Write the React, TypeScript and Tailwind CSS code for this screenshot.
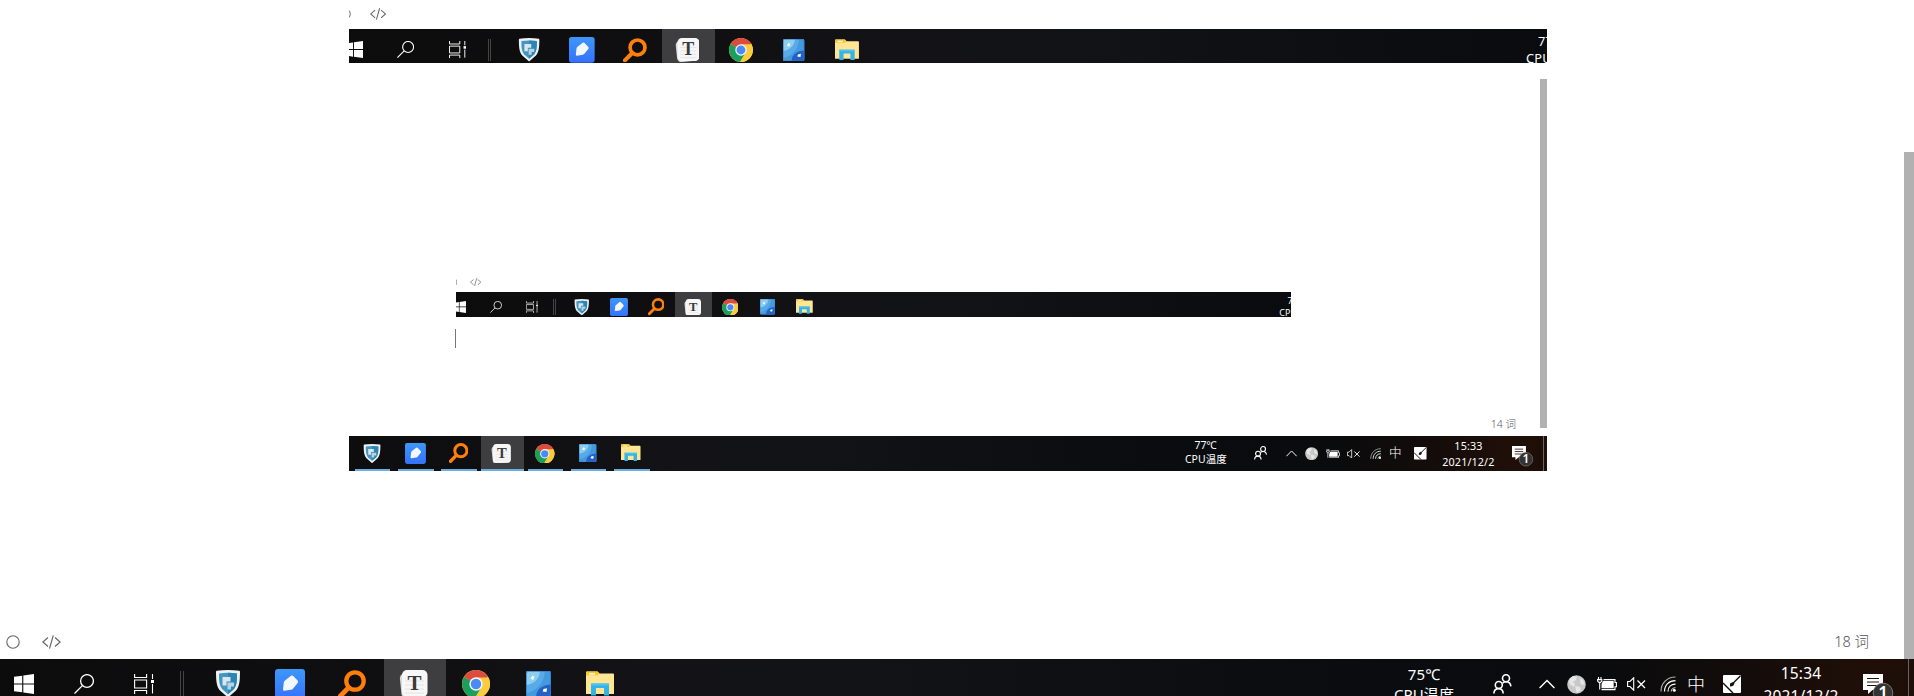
import React from "react";

function WindowsIcon() {
  return (
    <svg width="20" height="20" viewBox="0 0 20 20" fill="#fff">
      <path d="M0 2.8 8.2 1.7V9.4H0zM9.3 1.5 20 0V9.4H9.3zM0 10.5H8.2V18.3L0 17.2zM9.3 10.5H20V20L9.3 18.5z" />
    </svg>
  );
}

function SearchIcon() {
  return (
    <svg width="20" height="20" viewBox="0 0 20 20" fill="none" stroke="#fff" strokeWidth="1.3">
      <circle cx="13" cy="7" r="6.4" />
      <path d="M8.4 11.6.5 19.5" />
    </svg>
  );
}

function TaskViewIcon() {
  return (
    <svg width="20" height="20" viewBox="0 0 20 20" fill="none" stroke="#fff" strokeWidth="1.1">
      <path d="M.6 0v3.5h12V0M.6 20v-3.5h12V20M.6 6h12v8H.6zM18.5 0v5M18.5 10v9.5" />
      <rect x="17" y="6" width="3" height="3" fill="#fff" stroke="none" />
    </svg>
  );
}

function ShieldIcon() {
  return (
    <svg width="26" height="28" viewBox="0 0 26 28">
      <path d="M1.600.8Q13-.6 24.400.8 25.200 1 25 3C24.800 9 25 16 21 20.500L13 27.500 5 20.500C1 16 1.200 9 1 3Q.8 1 1.600.8z" fill="#eef1f3" />
      <path d="M4 3.600Q13 2 22 3.600C22 10 22 15 19 19L13 24.200 7 19C4 15 4 10 4 3.600z" fill="#4197c2" />
      <path d="M13 2.800Q18 2.800 22 3.600C22 10 22 15 19 19L13 24.200z" fill="#2b86b4" />
      <path d="M7.500 7h8v4.500h-4v4h-4z" fill="#dbe6ec" />
      <path d="M12.500 12.500h6.500v4h-3v3h-3.500z" fill="#b9d2df" />
    </svg>
  );
}

function NoteIcon() {
  return (
    <svg width="30" height="30" viewBox="0 0 30 30">
      <defs>
        <linearGradient id="note" x1="0" y1="0" x2="0" y2="1">
          <stop offset="0" stopColor="#3d97fb" />
          <stop offset="1" stopColor="#3672fb" />
        </linearGradient>
      </defs>
      <rect width="30" height="30" rx="3" fill="url(#note)" />
      <path d="M8 20.500 8.800 13.500Q9 12.300 10 11.500L16 6.800Q17.200 6 18.200 7L22.600 11.600Q23.600 12.800 22.600 14L18 19.700Q17.300 20.500 16 20.700L9.200 21.800Q7.900 21.900 8 20.500z" fill="#f3f8ff" />
    </svg>
  );
}

function FinderIcon() {
  return (
    <svg width="28" height="29" viewBox="0 0 28 29" fill="none" stroke="#ff7f0a">
      <circle cx="17" cy="11" r="8.700" strokeWidth="4.300" />
      <path d="M10.500 17.800 2.200 26.200" strokeWidth="4.800" strokeLinecap="round" />
    </svg>
  );
}

function TyporaIcon() {
  return (
    <svg width="29" height="28" viewBox="0 0 29 28" className="mr-0.5">
      <rect x="1.500" y="2.500" width="25" height="25" rx="5" fill="#d9d9d9" transform="rotate(-6 14 14)" />
      <rect x="3" y="0" width="25.500" height="27" rx="5" fill="#f7f7f7" />
      <path d="M6 11h19M6 15h19M6 19h19M6 23h19" stroke="#e2e2e2" strokeWidth="1" />
      <text x="15.500" y="20" textAnchor="middle" fontFamily="Liberation Serif, serif" fontWeight="700" fontSize="21" fill="#3a3a3a">T</text>
    </svg>
  );
}

function ChromeIcon() {
  return (
    <svg width="28" height="28" viewBox="0 0 28 28">
      <circle cx="14" cy="14" r="14" fill="#fbcb3e" />
      <path d="M14 14 1.880 7A14 14 0 0 1 26.120 7z" fill="#dc4b3e" />
      <path d="M14 14 1.880 7A14 14 0 0 0 13 27.960L19.500 17z" fill="#1b9f5c" />
      <path d="M14 7.400H26.300A14 14 0 0 1 13 27.960L19.800 17z" fill="#fbcb3e" />
      <circle cx="14" cy="14" r="6.700" fill="#f4f7fb" />
      <circle cx="14" cy="14" r="5.200" fill="#4a8af4" />
    </svg>
  );
}

function GalleryIcon() {
  return (
    <svg width="25" height="26" viewBox="0 0 25 26">
      <defs>
        <clipPath id="tile"><rect width="25" height="26" rx="2" /></clipPath>
      </defs>
      <g clipPath="url(#tile)">
        <rect width="25" height="26" fill="#58abe8" />
        <path d="M0 22C10 21 18 12 19 0H25V26H0z" fill="#459ade" />
        <path d="M0 0H14C13.500 8 8 13 0 14z" fill="#8ccdf2" />
        <path d="M10 26C10.500 18 16 14 25 13.500V26z" fill="#2361c8" />
      </g>
      <path d="m6.500 4.500 2.200 1.500-1.500 3-2.700-1.500z" fill="#fff" />
      <path d="m17.500 18 3.500-.8-.5 3.800-3.800-.5z" fill="#fff" />
      <rect x=".4" y=".4" width="24.200" height="25.200" rx="2" fill="none" stroke="#2d7cc4" strokeWidth=".8" />
    </svg>
  );
}

function FolderIcon() {
  return (
    <svg width="28" height="26" viewBox="0 0 28 26">
      <path d="M0 1.500Q0 .5 1 .5H11.500L13.500 2.500H27Q28 2.500 28 3.500V23H0z" fill="#ffe594" />
      <path d="M0 1.500Q0 .5 1 .5H11.500L13.500 2.500 11.500 4.300H0z" fill="#f9c72c" />
      <rect x="3" y="2" width="6" height="1.700" fill="#fff6d8" />
      <path d="M5 24.500V12.500H23V24.500H18V17H10V24.500z" fill="#33b4e8" />
      <path d="M5 12.500H23V14.500H5z" fill="#4cc3f0" />
    </svg>
  );
}

function PeopleIcon() {
  return (
    <svg width="19" height="20" viewBox="0 0 19 20" fill="none" stroke="#fff" strokeWidth="1.600">
      <circle cx="13" cy="4.300" r="3.500" />
      <circle cx="5.800" cy="11" r="3.500" />
      <path d="M.9 19.500C1 16.500 3 14.600 5.700 14.600S10 16.500 10.200 19.500M9.600 9.200C10.500 8.200 11.700 7.800 13 7.800c2.700 0 4.600 1.900 4.900 4.500" />
    </svg>
  );
}

function ChevronIcon() {
  return (
    <svg width="16" height="10" viewBox="0 0 16 10" fill="none" stroke="#fff" strokeWidth="1.400">
      <path d="M.6 9 8 1.400 15.400 9" />
    </svg>
  );
}

function GlobeIcon() {
  return (
    <svg width="19" height="19" viewBox="0 0 19 19">
      <circle cx="9.500" cy="9.500" r="9.300" fill="#c8c8c8" />
      <path d="M2.500 4 6 1l4 1-1 3-3 2 2 2-1 3-3-2-2-2zM12 3l4 2 1.500 4-2.500 1-2-3 .5-2zM8 11l5 1 1 3-4 3-1-3z" fill="#e6e6e6" />
    </svg>
  );
}

function BatteryIcon() {
  return (
    <svg width="20" height="14" viewBox="0 0 20 14" fill="none" stroke="#fff" strokeWidth="1.100">
      <path d="M1.500 0v2M4 0v2M.6 2.600h4.200V4L3.600 5.400H1.900L.6 4zM2.700 5.400v7.200M4.500 12.600H18V9.700H19.400V5.500H18V2.600H6.500" />
      <path d="M6 4H16.700V11.200H4.500V7z" fill="#fff" stroke="none" />
    </svg>
  );
}

function MutedIcon() {
  return (
    <svg width="19" height="14" viewBox="0 0 19 14" fill="none" stroke="#fff" strokeWidth="1.100">
      <path d="M.6 4.500H3L6.700.8V13.200L3 9.500H.6z" />
      <path d="m10.500 3.500 7.500 7.500M18 3.500 10.500 11" strokeWidth="1.300" />
    </svg>
  );
}

function WifiIcon() {
  return (
    <svg width="17" height="16" viewBox="0 0 17 16" fill="none" stroke="#fff" strokeWidth="1.200">
      <path d="M1 15.500C1 7 7 1 15.500 1" stroke="#aaa" />
      <path d="M4.500 15.500C4.500 9 9 4.600 15.500 4.600" />
      <path d="M8 15.500C8 11 11 8.200 15.500 8.200" />
      <path d="M11.200 15.500q.3-3.500 4.300-4" stroke="#bbb" />
      <circle cx="14.300" cy="14.200" r="1.500" fill="#fff" stroke="none" />
    </svg>
  );
}

function PenIcon() {
  return (
    <svg width="18" height="18" viewBox="0 0 18 18">
      <rect width="18" height="18" rx="1" fill="#fff" />
      <path d="M17.500.8 10 8.200M0 8 10 18" stroke="#111" strokeWidth="1.400" />
      <path d="M7 8.500 10 7l1.500 1.500L10 11l-3 .5z" fill="#111" />
    </svg>
  );
}

function NotificationIcon() {
  return (
    <svg width="31" height="31" viewBox="0 0 31 31">
      <path d="M0 0H20V16H9.500L5 20V16H0z" fill="#fff" />
      <path d="M4 4.500H16M4 8H16M4 11.500H16" stroke="#24130c" strokeWidth="1.200" />
      <circle cx="20" cy="19" r="9.800" fill="#333" stroke="#777" strokeWidth="1" />
      <text x="20" y="25" textAnchor="middle" fontFamily="Noto Sans, sans-serif" fontWeight="600" fontSize="17" fill="#fff">1</text>
    </svg>
  );
}

const apps = [
  { id: "guard", icon: <ShieldIcon /> },
  { id: "note", icon: <NoteIcon /> },
  { id: "finder", icon: <FinderIcon /> },
  { id: "typora", icon: <TyporaIcon />, active: true },
  { id: "chrome", icon: <ChromeIcon /> },
  { id: "gallery", icon: <GalleryIcon /> },
  { id: "files", icon: <FolderIcon /> },
];

function Slot({ className, children }: { className: string; children: React.ReactNode }) {
  return <div className={"flex shrink-0 items-center justify-center " + className}>{children}</div>;
}

function Taskbar({ temperature, time }: { temperature: string; time: string }) {
  return (
    <div className="flex h-[50px] w-[1914px] shrink-0 items-center bg-[linear-gradient(90deg,#0c0c0d_0%,#0f0f11_20%,#131317_34%,#121317_45%,#0a0c0f_70%,#0a0b0d_84%,#130c0a_91%,#200f08_98%,#1c0e08_100%)] text-[15px] text-white">
      <Slot className="w-[54px] pr-1.5"><WindowsIcon /></Slot>
      <Slot className="w-[60px]"><SearchIcon /></Slot>
      <Slot className="w-[60px]"><TaskViewIcon /></Slot>
      <div className="mr-3.5 ml-1.5 h-[26px] w-1 shrink-0 border-x border-[#444]" />
      {apps.map((app) => (
        <div key={app.id} className={"flex h-full w-[62px] shrink-0 flex-col items-center " + (app.active ? "bg-[#3e3e40]" : "")}>
          <div className="flex h-[47px] items-center pt-[3px] pr-0.5">{app.icon}</div>
          <div className={"h-[3px] bg-[#6aaee4] " + (app.active ? "w-full" : "w-[51px]")} />
        </div>
      ))}
      <div className="mr-px ml-auto w-20 shrink-0 text-center leading-5 tracking-[0.1px] whitespace-nowrap">
        <div>{temperature}</div>
        <div>CPU温度</div>
      </div>
      <Slot className="ml-[13px] w-12"><PeopleIcon /></Slot>
      <Slot className="ml-[9px] w-6"><ChevronIcon /></Slot>
      <Slot className="ml-[5px] w-6"><GlobeIcon /></Slot>
      <Slot className="ml-[7px] w-6"><BatteryIcon /></Slot>
      <Slot className="ml-[5px] w-6"><MutedIcon /></Slot>
      <Slot className="ml-2 w-6"><WifiIcon /></Slot>
      <Slot className="ml-1 w-6 text-[18px] font-light">中</Slot>
      <Slot className="ml-3 w-6"><PenIcon /></Slot>
      <div className="mr-px ml-[15px] w-[84px] shrink-0 pt-px text-center text-[15.500px] leading-[23px] tracking-[0.15px] whitespace-nowrap">
        <div>{time}</div>
        <div>2021/12/2</div>
      </div>
      <Slot className="ml-[19px] w-[31px] pt-[11px]"><NotificationIcon /></Slot>
      <div className="mr-[5px] ml-[14px] h-full w-px shrink-0 bg-[#6b6461]" />
    </div>
  );
}

function ModeIcons() {
  return (
    <div className="flex items-center gap-[22px] pl-[5.500px]">
      <svg width="14" height="14" viewBox="0 0 14 14" fill="none" stroke="#666" strokeWidth="1.100">
        <circle cx="7" cy="7" r="6.200" />
      </svg>
      <svg width="19" height="14" viewBox="0 0 19 14" fill="none" stroke="#666" strokeWidth="1.200">
        <path d="M6 2.500.9 7 6 11.500M13 2.500 18.100 7 13 11.500M11.300.3 7.500 13.700" />
      </svg>
    </div>
  );
}

/* Left-cropped strip: the editor's mode icons above the top part of the taskbar. */
function Strip() {
  return (
    <div className="-ml-[17.500px] flex w-[1914px] flex-col">
      <div className="flex h-[33.500px] items-center pb-px"><ModeIcons /></div>
      <Taskbar temperature="77℃" time="15:33" />
    </div>
  );
}

export default function App() {
  return (
    <div className="flex h-[696px] w-[1914px] flex-col overflow-hidden bg-white font-['Noto_Sans','Noto_Sans_CJK_SC',sans-serif]">
      <div className="flex h-[659px] shrink-0">
        <div className="flex w-[1904px] flex-col">
          <div className="flex h-[611px] shrink-0 flex-col pl-[349px]">
            <div className="h-[63px] w-[1198px] shrink-0 overflow-hidden">
              <div className="[zoom:0.855]"><Strip /></div>
            </div>
            <div className="mt-4 flex h-[349px] w-[1198px] shrink-0 justify-between">
              <div className="flex w-[942px] flex-col pt-[193px] pl-[106px]">
                <div className="ml-px h-[44.500px] w-[835px] shrink-0 overflow-hidden">
                  <div className="[zoom:0.598]"><Strip /></div>
                </div>
                <div className="mt-3 h-[19px] w-px bg-[#777]" />
              </div>
              <div className="flex items-end gap-6">
                <span className="-mb-[3px] text-[10.500px] leading-[14px] font-light text-[#555]">14 词</span>
                <div className="h-full w-[7px] bg-[#b1b1b1]" />
              </div>
            </div>
            <div className="mt-2 h-[35px] w-[1198px] overflow-hidden">
              <div className="[zoom:0.697]">
                <div className="-ml-[195px]"><Taskbar temperature="77℃" time="15:33" /></div>
              </div>
            </div>
          </div>
          <div className="flex flex-1 items-center justify-between pt-3.5 pr-[35px]">
            <ModeIcons />
            <span className="text-[14.500px] font-light text-[#555]">18 词</span>
          </div>
        </div>
        <div className="mt-[152px] w-2.5 bg-[#b1b1b1]" />
      </div>
      <Taskbar temperature="75℃" time="15:34" />
    </div>
  );
}
